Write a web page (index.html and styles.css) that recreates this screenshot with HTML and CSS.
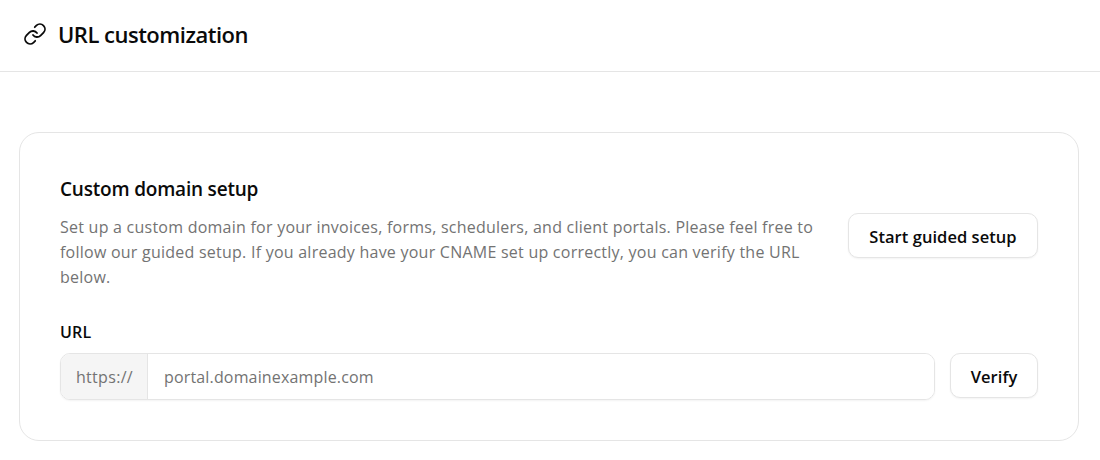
FILE: index.html
```html
<!DOCTYPE html>
<html lang="en">
<head>
    <meta charset="UTF-8">
    <meta name="viewport" content="width=device-width, initial-scale=1.0">
    <title>URL customization</title>
    <link rel="stylesheet" href="styles.css">
</head>
<body>
    <header class="page-header">
        <svg class="link-icon" viewBox="0 0 24 24" fill="none" stroke="currentColor" stroke-width="1.8" stroke-linecap="round" stroke-linejoin="round">
            <path d="M10 13a5 5 0 0 0 7.54.54l3-3a5 5 0 0 0-7.07-7.07l-1.72 1.71"/>
            <path d="M14 11a5 5 0 0 0-7.54-.54l-3 3a5 5 0 0 0 7.07 7.07l1.71-1.71"/>
        </svg>
        <h1>URL customization</h1>
    </header>

    <main class="content">
        <section class="card">
            <div class="setup-row">
                <div class="setup-text">
                    <h2>Custom domain setup</h2>
                    <p>Set up a custom domain for your invoices, forms, schedulers, and client portals. Please feel free to follow our guided setup. If you already have your CNAME set up correctly, you can verify the URL below.</p>
                </div>
                <button class="btn guided-btn">Start guided setup</button>
            </div>

            <label class="url-label" for="url">URL</label>
            <div class="url-row">
                <div class="input-group">
                    <span class="prefix">https://</span>
                    <input id="url" type="text" placeholder="portal.domainexample.com">
                </div>
                <button class="btn verify-btn">Verify</button>
            </div>
        </section>
    </main>
</body>
</html>
```

FILE: styles.css
```css
* {
    box-sizing: border-box;
}
body {
    margin: 0;
    background-color: #fff;
    color: #0a0a0a;
    font-family: "Open Sans", "Noto Sans", Arial, sans-serif;
}
.page-header {
    display: flex;
    align-items: center;
    gap: 11px;
    height: 72px;
    padding: 0 23px 3px;
    border-bottom: 1px solid #e5e5e5;
}
.link-icon {
    width: 24px;
    height: 24px;
    flex-shrink: 0;
}
h1 {
    margin: 0 0 1px;
    font-size: 22px;
    font-weight: 600;
    letter-spacing: -0.5px;
}
.content {
    padding: 60px 21px 0 19px;
}
.card {
    padding: 43px 40px 40px;
    border: 1px solid #e5e5e5;
    border-radius: 20px;
}
.setup-row {
    display: flex;
    align-items: center;
    gap: 30px;
}
.setup-text {
    flex: 1;
}
h2 {
    margin: 0 0 13px;
    font-size: 19px;
    line-height: 26px;
    font-weight: 600;
    letter-spacing: -0.2px;
}
.setup-text p {
    margin: 0;
    color: #737373;
    font-size: 16px;
    line-height: 25px;
    letter-spacing: 0.24px;
}
.btn {
    height: 45px;
    padding-top: 2px;
    border: 1px solid #e5e5e5;
    border-radius: 10px;
    background-color: #fff;
    box-shadow: 0 1px 2px rgba(0,0,0,0.05);
    color: #0a0a0a;
    font-family: inherit;
    font-size: 16.5px;
    font-weight: 600;
    letter-spacing: 0.05px;
    cursor: pointer;
}
.guided-btn {
    width: 190px;
    flex-shrink: 0;
    margin-top: 5px;
}
.verify-btn {
    width: 88px;
    flex-shrink: 0;
}
.url-label {
    display: block;
    margin: 30px 0 9px;
    font-size: 16px;
    line-height: 24px;
    font-weight: 600;
    letter-spacing: 0.2px;
}
.url-row {
    display: flex;
    align-items: flex-start;
    gap: 15px;
}
.input-group {
    flex: 1;
    display: flex;
    height: 47px;
    border: 1px solid #e5e5e5;
    border-radius: 10px;
    overflow: hidden;
    box-shadow: 0 1px 2px rgba(0,0,0,0.05);
}
.prefix {
    display: flex;
    align-items: center;
    width: 87px;
    padding: 1px 0 0 15px;
    border-right: 1px solid #e5e5e5;
    background-color: #f5f5f5;
    color: #737373;
    font-size: 16px;
    letter-spacing: 0.3px;
}
input {
    flex: 1;
    min-width: 0;
    padding: 1px 16px 0;
    border: none;
    outline: none;
    font-family: inherit;
    font-size: 16px;
    letter-spacing: 0.16px;
}
input::placeholder {
    color: #737373;
    opacity: 1;
}
```
